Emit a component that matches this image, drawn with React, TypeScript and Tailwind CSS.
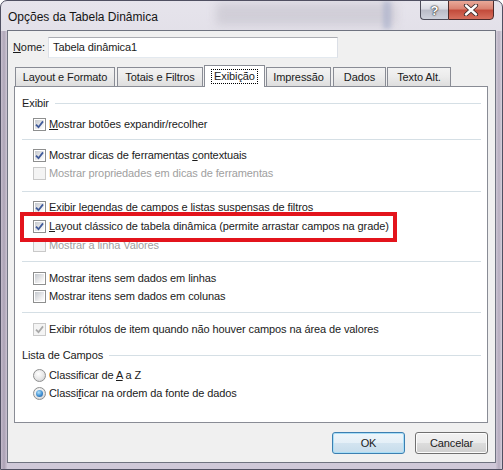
import React from "react";

const Check = ({ checked = false, disabled = false }: { checked?: boolean; disabled?: boolean }) => (
  <span
    className={
      disabled
        ? "w-[13px] h-[13px] shrink-0 border border-[#c9c9c9] bg-[#f4f4f4] p-[1px] flex"
        : "w-[13px] h-[13px] shrink-0 border border-[#8e8f8f] bg-white p-[1px] flex"
    }
  >
    <span
      className={
        disabled
          ? "flex-1 bg-[#f4f4f4] flex items-center justify-center"
          : "flex-1 bg-[linear-gradient(135deg,#c4c8ce_0%,#eeeeef_65%,#ffffff_100%)] flex items-center justify-center"
      }
    >
      {checked && (
        <svg width="9" height="9" viewBox="0 0 9 9">
          <path
            d="M1 4.6 L3.5 7.2 L8 1.4"
            fill="none"
            stroke={disabled ? "#a8a8a8" : "#3f5a9a"}
            strokeWidth="1.8"
          />
        </svg>
      )}
    </span>
  </span>
);

const Row = ({
  children,
  checked = false,
  disabled = false,
  greyText = false,
  className = "",
}: {
  children: React.ReactNode;
  checked?: boolean;
  disabled?: boolean;
  greyText?: boolean;
  className?: string;
}) => (
  <div className={"flex items-center h-[18px] pl-[18px] " + className}>
    <Check checked={checked} disabled={disabled} />
    <span className={greyText ? "ml-[3px] text-[#a0a0a0]" : "ml-[3px] text-[#1b1b1b]"}>{children}</span>
  </div>
);

const Radio = ({ checked = false }: { checked?: boolean }) => (
  <span className="w-[13px] h-[13px] shrink-0 rounded-full border border-[#8e8f8f] bg-[radial-gradient(circle_at_40%_35%,#ffffff_0%,#e6e6e6_55%,#c4c6ca_100%)] flex items-center justify-center">
    {checked && (
      <span className="w-[7px] h-[7px] rounded-full bg-[radial-gradient(circle_at_40%_35%,#b5e3fb_0%,#3f8fd2_55%,#1c4e8e_100%)]" />
    )}
  </span>
);

const Sep = ({ className = "" }: { className?: string }) => (
  <div className={"h-px bg-[#d5dfe5] ml-[7px] mr-[6px] " + className} />
);

const GroupHead = ({ label, className = "" }: { label: string; className?: string }) => (
  <div className={"flex items-center h-[16px] pl-[7px] pr-[6px] " + className}>
    <span className="text-[#1b1b1b]">{label}</span>
    <div className="flex-1 h-px bg-[#d5dfe5] ml-[6px]" />
  </div>
);

const Tab = ({ label, w, className = "" }: { label: string; w: string; className?: string }) => (
  <div
    className={
      "h-[19px] border border-b-0 border-[#898c95] bg-[linear-gradient(to_bottom,#f3f3f3_0%,#ebebeb_50%,#dedede_100%)] flex items-center justify-center text-[#1b1b1b] " +
      w +
      " " +
      className
    }
  >
    {label}
  </div>
);

export default function App() {
  return (
    <div className="w-[503px] h-[470px] relative overflow-hidden rounded-t-[7px] border border-[#505062] bg-[linear-gradient(to_bottom,#e6e4ec_0%,#d8d4de_30%,#cfc8d8_100%)] flex flex-col font-['Liberation_Sans',Arial,sans-serif] text-[11px] tracking-[-0.1px]">
      {/* blurred glass background */}
      <div className="absolute left-[215px] top-[2px] w-[180px] h-[22px] bg-[#b4b1bc] opacity-40 blur-[5px]" />
      <div className="absolute left-[382px] top-[0px] w-[8px] h-[28px] bg-[#9fa8c8] opacity-50 blur-[2px]" />
      <div className="absolute left-[0px] top-[30px] w-[6px] h-[440px] bg-[linear-gradient(to_right,#bfb5c6,#9a8fa4,#c9c0d0)] opacity-70" />
      <div className="absolute right-[0px] top-[30px] w-[6px] h-[440px] bg-[linear-gradient(to_right,#c9c0d0,#a99fb3,#d6d0dc)] opacity-70" />

      {/* title bar */}
      <div className="relative h-[29px] flex items-start pl-[7px] pr-[8px]">
        <span className="mt-[7px] text-[12px] tracking-normal text-[#141414]">Opções da Tabela Dinâmica</span>
        <div className="flex-1" />
        <div className="-mt-px flex">
          <div className="w-[28px] h-[20px] border border-[#4d4d5a] border-r-0 rounded-bl-[4px] bg-[linear-gradient(to_bottom,#f1f1f5_0%,#d9dae2_45%,#b9bbc7_50%,#cfd2dc_100%)] flex items-center justify-center">
            <span className="text-[13px] font-bold text-white leading-none [text-shadow:0_0_1px_#333,0_0_1px_#333,0_0_2px_#333]">?</span>
          </div>
          <div className="w-[46px] h-[20px] border border-[#4d2b2b] rounded-br-[4px] bg-[linear-gradient(to_bottom,#e9a999_0%,#d98170_45%,#c24a3a_50%,#d7705e_100%)] flex items-center justify-center">
            <svg width="16" height="12" viewBox="0 0 16 12">
              <path d="M3 1.5 L13 10.5 M13 1.5 L3 10.5" stroke="#3b2a2a" strokeWidth="4.2" strokeLinecap="round" />
              <path d="M3 1.5 L13 10.5 M13 1.5 L3 10.5" stroke="#ffffff" strokeWidth="2.4" strokeLinecap="round" />
            </svg>
          </div>
        </div>
      </div>

      {/* client */}
      <div className="relative mx-[6px] mb-[6px] flex-1 border border-[#6f7380] bg-[#f0f0f0] flex flex-col">
        {/* name row */}
        <div className="flex items-center pl-[5px] pt-[6px]">
          <span className="w-[35px] text-[#1b1b1b]">
            <span className="underline">N</span>ome:
          </span>
          <div className="w-[290px] h-[21px] border border-[#abadb3] border-l-[#dbdfe6] border-r-[#dbdfe6] border-b-[#e3e9ef] bg-white flex items-center pl-[4px] text-[#1b1b1b]">
            Tabela dinâmica1
          </div>
        </div>

        {/* tabs */}
        <div className="mt-[7px] ml-[6px] h-[21px] flex items-end">
          <Tab label="Layout e Formato" w="w-[100px]" className="ml-px" />
          <Tab label="Totais e Filtros" w="w-[86px]" className="ml-[2px]" />
          <div className="relative z-10 w-[61px] h-[22px] -mb-px ml-px border border-b-0 border-[#898c95] bg-white flex items-start justify-center pt-[3px]">
            <span className="border border-dotted border-[#000] px-[2px] h-[15px] flex items-center text-[#1b1b1b]">Exibição</span>
          </div>
          <Tab label="Impressão" w="w-[65px]" className="ml-px" />
          <Tab label="Dados" w="w-[53px]" className="ml-[2px]" />
          <Tab label="Texto Alt." w="w-[64px]" className="ml-px" />
        </div>

        {/* panel */}
        <div className="relative ml-[6px] w-[474px] h-[337px] border border-[#898c95] bg-white flex flex-col">
          <GroupHead label="Exibir" className="mt-[8px]" />
          <Row checked className="mt-[4px]">
            <span className="underline">M</span>ostrar botões expandir/recolher
          </Row>
          <Sep className="mt-[6px]" />
          <Row checked className="mt-[6px]">
            Mostrar dicas de ferramentas <span className="underline">c</span>ontextuais
          </Row>
          <Row disabled greyText>
            Mostrar propriedades em dicas de ferramentas
          </Row>
          <Sep className="mt-[9px]" />
          <Row checked className="mt-[6px]">
            Exibir legendas de campos e listas suspensas de filtros
          </Row>
          <Row checked className="mt-[1px]">
            <span className="underline">L</span>ayout clássico de tabela dinâmica (permite arrastar campos na grade)
          </Row>
          <Row disabled greyText className="mt-[1px]">
            Mostrar a linha Valores
          </Row>
          <Sep className="mt-[7px]" />
          <Row className="mt-[7px]">Mostrar itens sem dados em linhas</Row>
          <Row>Mostrar itens sem dados em colunas</Row>
          <Sep className="mt-[7px]" />
          <Row checked disabled className="mt-[7px]">
            Exibir rótulos de item quando não houver campos na área de valores
          </Row>
          <GroupHead label="Lista de Campos" className="mt-[9px]" />
          <div className="flex items-center h-[18px] pl-[18px] mt-[3px]">
            <Radio />
            <span className="ml-[3px] text-[#1b1b1b]">
              Classificar de <span className="underline">A</span> a Z
            </span>
          </div>
          <div className="flex items-center h-[18px] pl-[18px]">
            <Radio checked />
            <span className="ml-[3px] text-[#1b1b1b]">
              Classi<span className="underline">f</span>icar na ordem da fonte de dados
            </span>
          </div>

          {/* red highlight annotation */}
          <div className="absolute left-[5px] top-[125px] w-[377px] h-[30px] border-4 border-[#e3141c]" />
        </div>

        {/* buttons */}
        <div className="mt-[9px] flex justify-end pr-[7px] gap-[10px]">
          <div className="w-[73px] h-[22px] rounded-[3px] border border-[#3c7fb1] shadow-[inset_0_0_0_1px_#a8def7] bg-[linear-gradient(to_bottom,#eef6fb_0%,#e4eff7_50%,#d3e4f0_50%,#c6dceb_100%)] flex items-center justify-center text-[#1b1b1b]">
            OK
          </div>
          <div className="w-[73px] h-[22px] rounded-[3px] border border-[#707070] shadow-[inset_0_0_0_1px_#fcfcfc] bg-[linear-gradient(to_bottom,#f2f2f2_0%,#ebebeb_50%,#dddddd_50%,#cfcfcf_100%)] flex items-center justify-center text-[#1b1b1b]">
            Cancelar
          </div>
        </div>
      </div>
    </div>
  );
}
